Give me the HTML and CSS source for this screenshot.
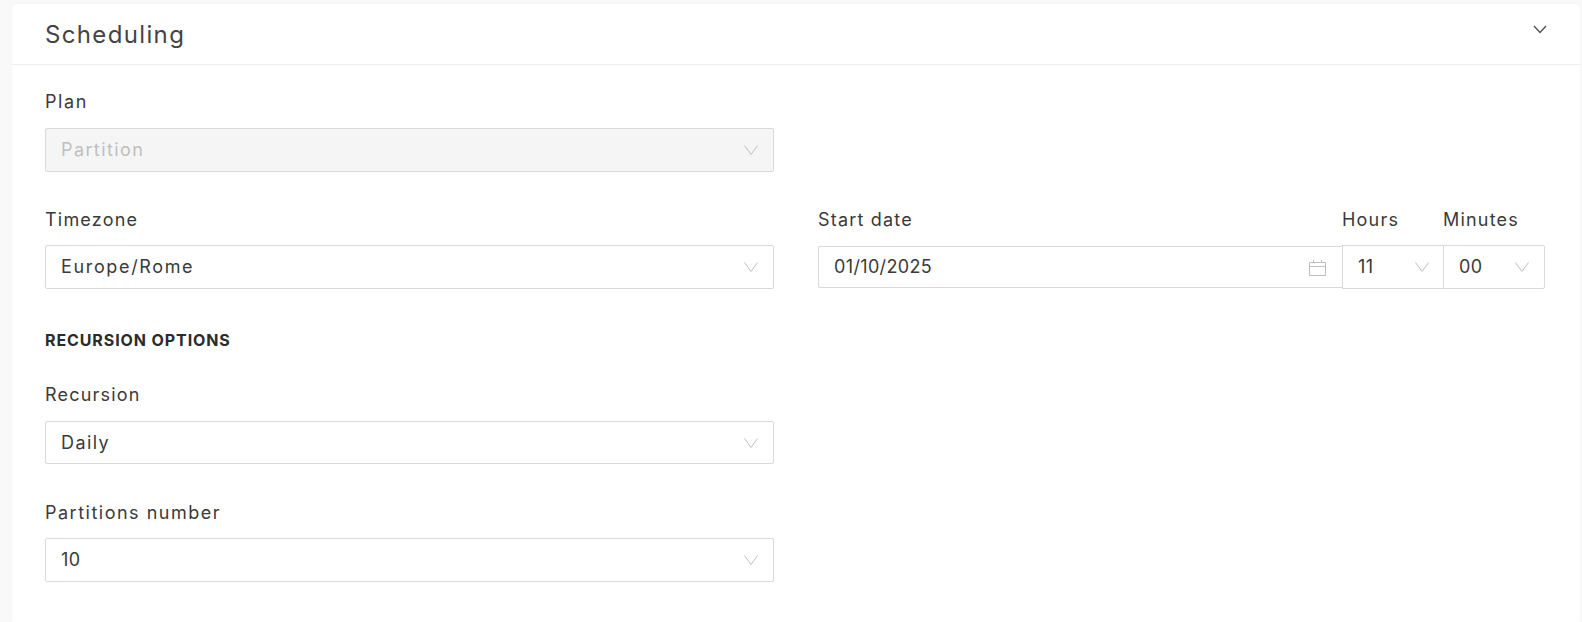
FILE: index.html
```html
<!DOCTYPE html>
<html lang="en">
<head>
<meta charset="utf-8">
<title>Scheduling</title>
<link rel="stylesheet" href="styles.css">
</head>
<body>
<svg class="defs" width="0" height="0" aria-hidden="true">
  <symbol id="chev" viewBox="0 0 14 10"><path d="M.5.5 7 9.500 13.500.5" fill="none" stroke="currentColor" stroke-width="1"/></symbol>
</svg>
<section class="card">
  <header class="card-head">
    <h2 class="card-title">Scheduling</h2>
    <svg class="collapse" viewBox="0 0 14 9"><path d="M1 1l6 6.500L13 1" fill="none" stroke="currentColor" stroke-width="1.500"/></svg>
  </header>
  <div class="card-body">
    <div class="field plan">
      <label class="label">Plan</label>
      <div class="select disabled"><span>Partition</span><svg class="chev"><use href="#chev"/></svg></div>
    </div>
    <div class="row">
      <div class="field half">
        <label class="label">Timezone</label>
        <div class="select tz"><span>Europe/Rome</span><svg class="chev"><use href="#chev"/></svg></div>
      </div>
      <div class="datetime">
        <div class="dt-date">
          <label class="label">Start date</label>
          <div class="dt-input">
            <span>01/10/2025</span>
            <svg class="cal" viewBox="0 0 17 17"><path d="M.5 3.500h16v13H.5zM.5 7.500h16M4.500 1v3M12.500 1v3" fill="none" stroke="currentColor"/></svg>
          </div>
        </div>
        <div class="dt-part hours">
          <label class="label">Hours</label>
          <div class="dt-select"><span>11</span><svg class="chev"><use href="#chev"/></svg></div>
        </div>
        <div class="dt-part minutes">
          <label class="label">Minutes</label>
          <div class="dt-select last"><span>00</span><svg class="chev"><use href="#chev"/></svg></div>
        </div>
      </div>
    </div>
    <h3 class="section-title">RECURSION OPTIONS</h3>
    <div class="field half recursion">
      <label class="label">Recursion</label>
      <div class="select"><span>Daily</span><svg class="chev"><use href="#chev"/></svg></div>
    </div>
    <div class="field half partitions">
      <label class="label">Partitions number</label>
      <div class="select numeric"><span>10</span><svg class="chev"><use href="#chev"/></svg></div>
    </div>
  </div>
</section>
</body>
</html>
```
FILE: styles.css
```css
* { box-sizing: border-box; }
html, body { height: 100%; }
body {
  margin: 0;
  padding: 4px 2px 0 12px;
  overflow: hidden;
  background: #f9f9f9;
  color: #3a3a3a;
  font-family: Inter, "Liberation Sans", sans-serif;
  font-size: 18px;
}
.defs { position: absolute; }
.card {
  height: 100%;
  background: #fff;
  border-radius: 4px 4px 0 0;
  box-shadow: 0 0 2px rgba(0,0,0,.06);
}
.card-head {
  height: 61px;
  padding: 0 33px;
  display: flex;
  justify-content: space-between;
  border-bottom: 1px solid #eeeeee;
}
.card-title {
  margin: 0;
  padding-top: 16px;
  font-size: 24px;
  line-height: 30px;
  font-weight: 400;
  color: #444;
  letter-spacing: 1.35px;
}
.collapse { width: 14px; height: 9px; margin-top: 21px; color: #555; }
.card-body { padding: 24px 35px 0 33px; }
.label {
  display: block;
  height: 25px;
  font-size: 18px;
  line-height: 25px;
  letter-spacing: 1.2px;
  white-space: nowrap;
}
.plan .label { letter-spacing: 1.6px; }
.partitions .label { letter-spacing: 1.5px; }
.field { width: 729px; }
.select {
  margin-top: 14px;
  height: 44px;
  padding: 0 15px;
  display: flex;
  align-items: center;
  justify-content: space-between;
  border: 1px solid #d9d9d9;
  border-radius: 2px;
  background: #fff;
  letter-spacing: 1.4px;
}
.select span, .dt-select span, .dt-input span { margin-bottom: 2px; }
.select.tz { letter-spacing: 1.65px; }
.select.numeric { letter-spacing: .35px; }
.select.disabled { background: #f5f5f5; color: #bfbfbf; }
.chev { width: 14px; height: 10px; color: #bfbfbf; flex: none; }
.row { display: flex; gap: 44px; margin-top: 35px; }
.row .select { margin-top: 13px; }
.datetime { flex: 1; display: flex; }
.dt-date { flex: 1; }
.hours { width: 101px; }
.minutes { width: 102px; }
.dt-input, .dt-select {
  height: 42px;
  margin-top: 14px;
  display: flex;
  align-items: center;
  justify-content: space-between;
  border: 1px solid #d9d9d9;
  background: #fff;
  letter-spacing: .35px;
}
.dt-input { padding: 0 16px 0 15px; border-radius: 2px 0 0 2px; border-right: 0; }
.dt-select { margin-top: 13px; height: 44px; padding: 0 14px 0 15px; border-right: 0; }
.dt-select.last { border-right: 1px solid #d9d9d9; border-radius: 0 2px 2px 0; padding-right: 15px; }
.cal { width: 17px; height: 17px; color: #bfbfbf; }
.section-title {
  margin: 41px 0 0;
  font-size: 16px;
  line-height: 20px;
  font-weight: 700;
  color: #2b2b2b;
  letter-spacing: .9px;
}
.recursion { margin-top: 32px; }
.recursion .select { height: 43px; }
.recursion .select span { margin-bottom: 0; }
.partitions { margin-top: 36px; }
.partitions .select { margin-top: 13px; }
```
